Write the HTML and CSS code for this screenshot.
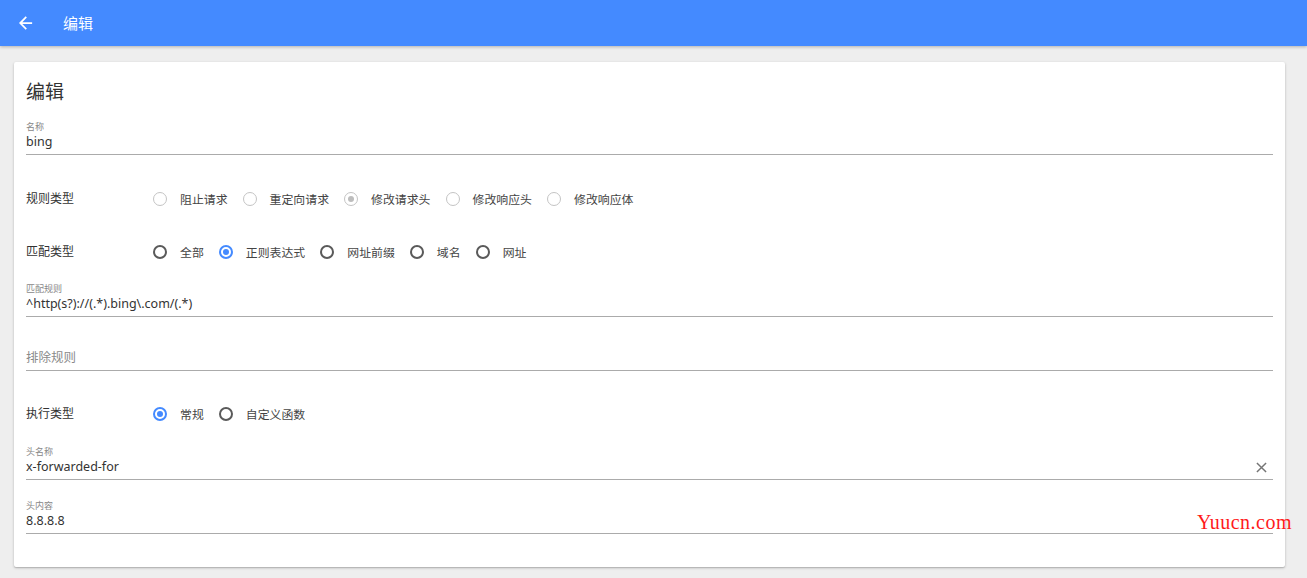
FILE: index.html
```html
<!DOCTYPE html>
<html lang="zh">
<head>
<meta charset="utf-8">
<title>编辑</title>
<link rel="stylesheet" href="styles.css">
</head>
<body>
<header class="topbar">
  <svg class="back" width="14" height="14" viewBox="0 0 16 16"><path d="M15 7H3.8l5.2-5.2L7.6.4 0 8l7.6 7.6 1.4-1.4L3.8 9H15z" fill="#fff"/></svg>
  <span class="topbar-title">编辑</span>
</header>
<main class="page">
  <section class="card">
    <h1 class="card-title">编辑</h1>

    <div class="field f-name">
      <div class="field-label">名称</div>
      <div class="field-input">bing</div>
    </div>

    <div class="radio-row r-rule">
      <div class="row-label">规则类型</div>
      <div class="radios">
        <span class="radio disabled"></span><span class="radio-text">阻止请求</span>
        <span class="radio disabled"></span><span class="radio-text">重定向请求</span>
        <span class="radio disabled checked"></span><span class="radio-text">修改请求头</span>
        <span class="radio disabled"></span><span class="radio-text">修改响应头</span>
        <span class="radio disabled"></span><span class="radio-text">修改响应体</span>
      </div>
    </div>

    <div class="radio-row r-match">
      <div class="row-label">匹配类型</div>
      <div class="radios">
        <span class="radio"></span><span class="radio-text">全部</span>
        <span class="radio checked"></span><span class="radio-text">正则表达式</span>
        <span class="radio"></span><span class="radio-text">网址前缀</span>
        <span class="radio"></span><span class="radio-text">域名</span>
        <span class="radio"></span><span class="radio-text">网址</span>
      </div>
    </div>

    <div class="field f-rule">
      <div class="field-label">匹配规则</div>
      <div class="field-input">^http(s?)://(.*).bing\.com/(.*)</div>
    </div>

    <div class="field f-exclude">
      <div class="field-label"></div>
      <div class="field-input placeholder">排除规则</div>
    </div>

    <div class="radio-row r-exec">
      <div class="row-label">执行类型</div>
      <div class="radios">
        <span class="radio checked"></span><span class="radio-text">常规</span>
        <span class="radio"></span><span class="radio-text">自定义函数</span>
      </div>
    </div>

    <div class="field f-hname">
      <div class="field-label">头名称</div>
      <div class="field-input with-clear">
        <span>x-forwarded-for</span>
        <svg class="clear" width="11" height="11" viewBox="0 0 12 12"><path d="M1 1l10 10M11 1L1 11" stroke="#757575" stroke-width="1.6" fill="none"/></svg>
      </div>
    </div>

    <div class="field f-hval">
      <div class="field-label">头内容</div>
      <div class="field-input">8.8.8.8</div>
    </div>

    <div class="watermark">Yuucn.com</div>
  </section>
</main>
</body>
</html>
```

FILE: styles.css
```css
* { box-sizing: border-box; }
html, body { margin: 0; padding: 0; }
body {
  background: #eeeeee;
  font-family: "Noto Sans", "Noto Sans CJK SC", sans-serif;
  color: #333;
  width: 1307px;
  height: 578px;
  overflow: hidden;
}
.topbar {
  height: 46px;
  background: #448aff;
  display: flex;
  align-items: center;
  padding-left: 19px;
  box-shadow: 0 1px 3px rgba(0,0,0,0.25);
  position: relative;
  z-index: 1;
}
.back { display: block; }
.topbar-title {
  color: #fff;
  font-size: 15px;
  margin-left: 30px;
  line-height: 20px;
}
.page {
  padding: 16px 22px 0 14px;
}
.card {
  position: relative;
  background: #fff;
  height: 505px;
  padding: 16px 12px 0 12px;
  box-shadow: 0 1px 3px rgba(0,0,0,0.2), 0 1px 1px rgba(0,0,0,0.12);
  border-radius: 2px;
}
.card-title {
  margin: 0;
  font-size: 19px;
  font-weight: 400;
  line-height: 28px;
  height: 28px;
  color: #333;
}
.field {
  border-bottom: 1px solid #ababab;
}
.field-label {
  font-size: 9px;
  line-height: 12px;
  height: 12px;
  color: #888;
}
.field-input {
  font-size: 12.5px;
  line-height: 18px;
  height: 21px;
  color: #333;
}
.field-input.placeholder { color: #8a8a8a; }
.with-clear {
  display: flex;
  align-items: flex-start;
  justify-content: space-between;
}
.clear { margin-right: 6px; margin-top: 4px; }
.f-name { margin-top: 15px; }
.f-rule { margin-top: 11px; }
.f-exclude { margin-top: 20px; }
.f-hname { margin-top: 12px; }
.f-hval { margin-top: 20px; }

.radio-row {
  display: flex;
  align-items: center;
  height: 40px;
}
.r-rule { margin-top: 24px; }
.r-match { margin-top: 13px; }
.r-exec { margin-top: 23px; }
.row-label {
  width: 127px;
  font-size: 12px;
  line-height: 16px;
  color: #333;
}
.radios {
  display: flex;
  align-items: center;
}
.radio {
  width: 14px;
  height: 14px;
  border-radius: 50%;
  border: 2px solid #5a5a5a;
  position: relative;
  flex: none;
}
.radio.checked { border-color: #448aff; }
.radio.checked::after {
  content: "";
  position: absolute;
  left: 2px; top: 2px;
  width: 6px; height: 6px;
  border-radius: 50%;
  background: #448aff;
}
.radio.disabled { border: 1.5px solid #c4c4c4; }
.radio.disabled.checked::after { background: #bdbdbd; left: 2.5px; top: 2.5px; }
.radio-text {
  font-size: 11.9px;
  line-height: 14px;
  color: #444;
  margin-left: 13px;
  margin-right: 15px;
}
.watermark {
  position: absolute;
  left: 1183px;
  top: 449px;
  font-family: "Liberation Serif", "DejaVu Serif", serif;
  font-size: 20px;
  line-height: 23px;
  color: #ff1a1a;
  letter-spacing: 0.5px;
}
```
